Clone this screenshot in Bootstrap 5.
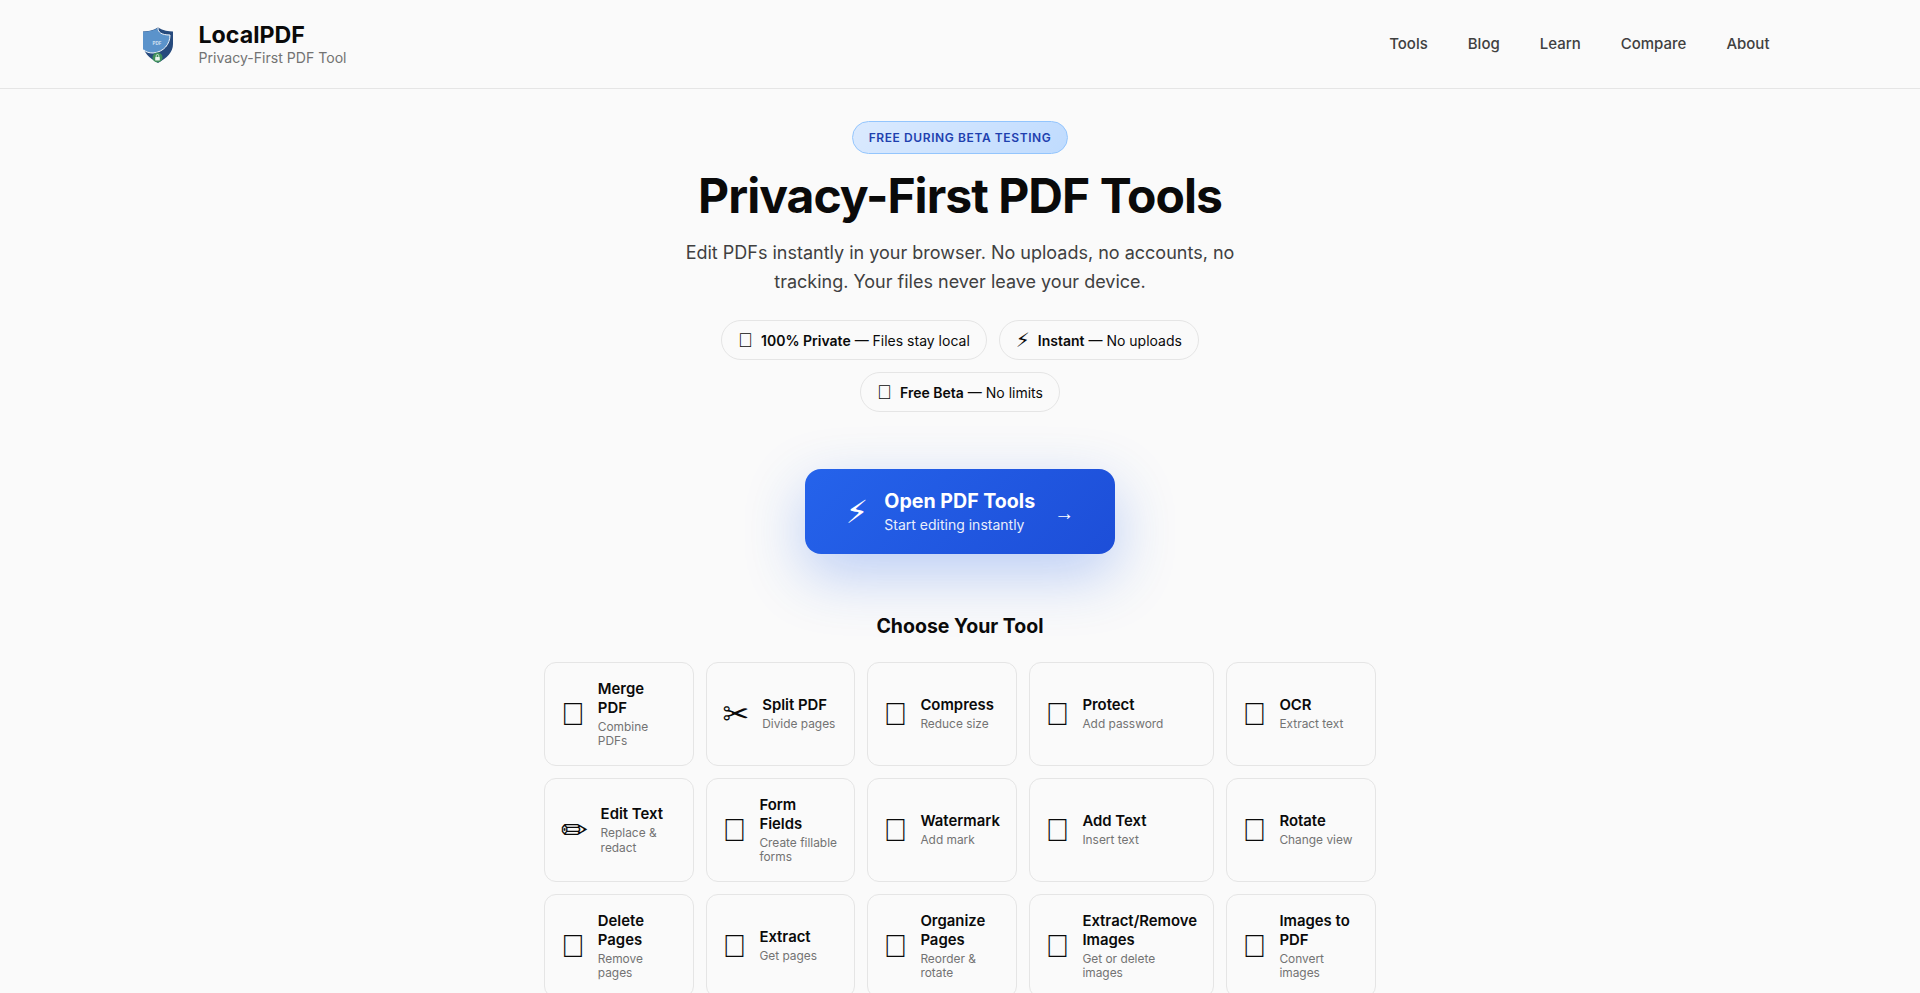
<!DOCTYPE html>
<html lang="en">
<head>
<meta charset="utf-8">
<title>LocalPDF</title>
<link href="https://cdn.jsdelivr.net/npm/bootstrap@5.3.0/dist/css/bootstrap.min.css" rel="stylesheet">
<style>
body{background:#fafafa;color:#0a0a0a;font-family:Inter,"Liberation Sans",sans-serif;}
.site-head{height:89px;border-bottom:1px solid #e5e5e5;padding:0 150.5px 0 138px;}
.brand-link{gap:20.5px;}
.brand-name{font-size:23.2px;font-weight:700;line-height:28px;color:#0a0a0a;}
.brand-sub{font-size:14.08px;line-height:18px;color:#737373;}
.head-link{font-size:15px;font-weight:500;color:#404040;text-decoration:none;}
.head-nav{gap:40px;}
.hero-wrap{padding-top:32px;}
.beta-tag{height:33px;padding:0 16px;border:1px solid #93c5fd;border-radius:999px;background:linear-gradient(135deg,#dbeafe,#bfdbfe);color:#1e40af;font-size:12px;font-weight:600;letter-spacing:.6px;}
.hero-title{font-size:48px;font-weight:700;line-height:58px;letter-spacing:-.96px;margin:13px 0 13px;}
.hero-text{max-width:600px;font-size:18px;line-height:29px;color:#404040;margin-bottom:24px;}
.pill-row{gap:12px;max-width:600px;}
.trust-pill{height:40px;padding:0 16px;border:1px solid #e5e5e5;border-radius:999px;font-size:14px;gap:8px;}
.trust-pill b{font-weight:600;}
.pill-ico{font-family:"Liberation Sans","DejaVu Sans",sans-serif;font-size:20px;line-height:1;}
.cta-btn{width:310px;height:85px;margin-top:57px;border-radius:16px;background:linear-gradient(135deg,#2563eb,#1d4ed8);color:#fff;text-decoration:none;box-shadow:0 20px 60px rgba(37,99,235,.3);gap:16px;}
.cta-bolt{font-family:"DejaVu Sans",sans-serif;font-size:32px;line-height:1;}
.cta-title{font-size:19.6px;font-weight:700;line-height:25px;}
.cta-sub{font-size:14px;line-height:21px;opacity:.9;}
.cta-arrow{font-family:"Liberation Sans",sans-serif;font-size:20px;margin-left:3px;margin-top:2px;}
.pick-title{font-size:19.5px;font-weight:700;line-height:26px;margin:59px 0 23px;}
.tool-grid{display:grid;grid-template-columns:149.6px 149px 150px 185px 150.4px;grid-auto-rows:104px;gap:12px;width:832px;}
.tool-box{border:1px solid #e5e5e5;border-radius:12px;padding:16px;gap:12.8px;color:#0a0a0a;text-decoration:none;}
.tool-ico{font-family:"Liberation Sans","DejaVu Sans",sans-serif;font-size:32px;line-height:1;flex:none;}
.tool-name{font-size:14.9px;font-weight:600;line-height:19px;margin-bottom:2px;}
.tool-desc{font-size:11.9px;line-height:14.5px;color:#737373;}
</style>
</head>
<body>
<header class="site-head d-flex align-items-center justify-content-between">
  <a href="#" class="brand-link d-flex align-items-center text-decoration-none">
    <svg width="40" height="40" viewBox="0 0 40 40" aria-hidden="true">
      <path d="M20 3.5 C25 6.5 31 7.5 35 7.5 V20 C35 28 29 34 20 39 C11 34 5 28 5 20 V7.5 C9 7.5 15 6.5 20 3.5Z" fill="#264a7d"/>
      <path d="M5 7.8 C10 7.8 16 6.5 20 4 C20 8 23 11 32 11 C32 20 26 28 15 29 C10 29 7 28 5 25Z" fill="#5b93cb"/>
      <path d="M20 4 C20 8 23 11 32 11 C32 20 26 28 15 29 C11 29 8 28 6 26" fill="none" stroke="#f4f7fb" stroke-width="1"/>
      <text x="19" y="21" text-anchor="middle" font-size="4.5" font-weight="600" fill="#dfeaf6" font-family="Inter,sans-serif">PDF</text>
      <circle cx="19.5" cy="33.5" r="5" fill="#3f8f5a"/>
      <rect x="17.2" y="33" width="4.6" height="3.6" rx=".6" fill="#e8f5ec"/>
      <path d="M18.2 33v-1.2a1.3 1.3 0 0 1 2.6 0V33" fill="none" stroke="#e8f5ec" stroke-width=".8"/>
    </svg>
    <span class="d-flex flex-column">
      <span class="brand-name">LocalPDF</span>
      <span class="brand-sub">Privacy-First PDF Tool</span>
    </span>
  </a>
  <nav class="d-flex head-nav">
    <a class="head-link" href="#">Tools</a>
    <a class="head-link" href="#">Blog</a>
    <a class="head-link" href="#">Learn</a>
    <a class="head-link" href="#">Compare</a>
    <a class="head-link" href="#">About</a>
  </nav>
</header>
<main class="hero-wrap d-flex flex-column align-items-center text-center">
  <div class="beta-tag d-inline-flex align-items-center">FREE DURING BETA TESTING</div>
  <h1 class="hero-title">Privacy-First PDF Tools</h1>
  <p class="hero-text">Edit PDFs instantly in your browser. No uploads, no accounts, no tracking. Your files never leave your device.</p>
  <div class="pill-row d-flex flex-wrap justify-content-center">
    <span class="trust-pill d-inline-flex align-items-center"><span class="pill-ico">&#xE000;</span><span><b>100% Private</b> — Files stay local</span></span>
    <span class="trust-pill d-inline-flex align-items-center"><span class="pill-ico">⚡&#xFE0E;</span><span><b>Instant</b> — No uploads</span></span>
    <span class="trust-pill d-inline-flex align-items-center"><span class="pill-ico">&#xE000;</span><span><b>Free Beta</b> — No limits</span></span>
  </div>
  <a href="#" class="cta-btn d-flex align-items-center justify-content-center">
    <span class="cta-bolt">⚡&#xFE0E;</span>
    <span class="text-start d-flex flex-column">
      <span class="cta-title">Open PDF Tools</span>
      <span class="cta-sub">Start editing instantly</span>
    </span>
    <span class="cta-arrow">→</span>
  </a>
  <h2 class="pick-title">Choose Your Tool</h2>
  <div class="tool-grid text-start">
    <a href="#" class="tool-box d-flex align-items-center"><span class="tool-ico">&#xE000;</span><span><div class="tool-name">Merge PDF</div><div class="tool-desc">Combine PDFs</div></span></a>
    <a href="#" class="tool-box d-flex align-items-center"><span class="tool-ico">✂&#xFE0E;</span><span><div class="tool-name">Split PDF</div><div class="tool-desc">Divide pages</div></span></a>
    <a href="#" class="tool-box d-flex align-items-center"><span class="tool-ico">&#xE000;</span><span><div class="tool-name">Compress</div><div class="tool-desc">Reduce size</div></span></a>
    <a href="#" class="tool-box d-flex align-items-center"><span class="tool-ico">&#xE000;</span><span><div class="tool-name">Protect</div><div class="tool-desc">Add password</div></span></a>
    <a href="#" class="tool-box d-flex align-items-center"><span class="tool-ico">&#xE000;</span><span><div class="tool-name">OCR</div><div class="tool-desc">Extract text</div></span></a>
    <a href="#" class="tool-box d-flex align-items-center"><span class="tool-ico">✏&#xFE0E;</span><span><div class="tool-name">Edit Text</div><div class="tool-desc">Replace &amp; redact</div></span></a>
    <a href="#" class="tool-box d-flex align-items-center"><span class="tool-ico">&#xE000;</span><span><div class="tool-name">Form Fields</div><div class="tool-desc">Create fillable forms</div></span></a>
    <a href="#" class="tool-box d-flex align-items-center"><span class="tool-ico">&#xE000;</span><span><div class="tool-name">Watermark</div><div class="tool-desc">Add mark</div></span></a>
    <a href="#" class="tool-box d-flex align-items-center"><span class="tool-ico">&#xE000;</span><span><div class="tool-name">Add Text</div><div class="tool-desc">Insert text</div></span></a>
    <a href="#" class="tool-box d-flex align-items-center"><span class="tool-ico">&#xE000;</span><span><div class="tool-name">Rotate</div><div class="tool-desc">Change view</div></span></a>
    <a href="#" class="tool-box d-flex align-items-center"><span class="tool-ico">&#xE000;</span><span><div class="tool-name">Delete Pages</div><div class="tool-desc">Remove pages</div></span></a>
    <a href="#" class="tool-box d-flex align-items-center"><span class="tool-ico">&#xE000;</span><span><div class="tool-name">Extract</div><div class="tool-desc">Get pages</div></span></a>
    <a href="#" class="tool-box d-flex align-items-center"><span class="tool-ico">&#xE000;</span><span><div class="tool-name">Organize Pages</div><div class="tool-desc">Reorder &amp; rotate</div></span></a>
    <a href="#" class="tool-box d-flex align-items-center"><span class="tool-ico">&#xE000;</span><span><div class="tool-name">Extract/Remove Images</div><div class="tool-desc">Get or delete images</div></span></a>
    <a href="#" class="tool-box d-flex align-items-center"><span class="tool-ico">&#xE000;</span><span><div class="tool-name">Images to PDF</div><div class="tool-desc">Convert images</div></span></a>
  </div>
</main>
<script src="https://cdn.jsdelivr.net/npm/bootstrap@5.3.0/dist/js/bootstrap.bundle.min.js"></script>
</body>
</html>
